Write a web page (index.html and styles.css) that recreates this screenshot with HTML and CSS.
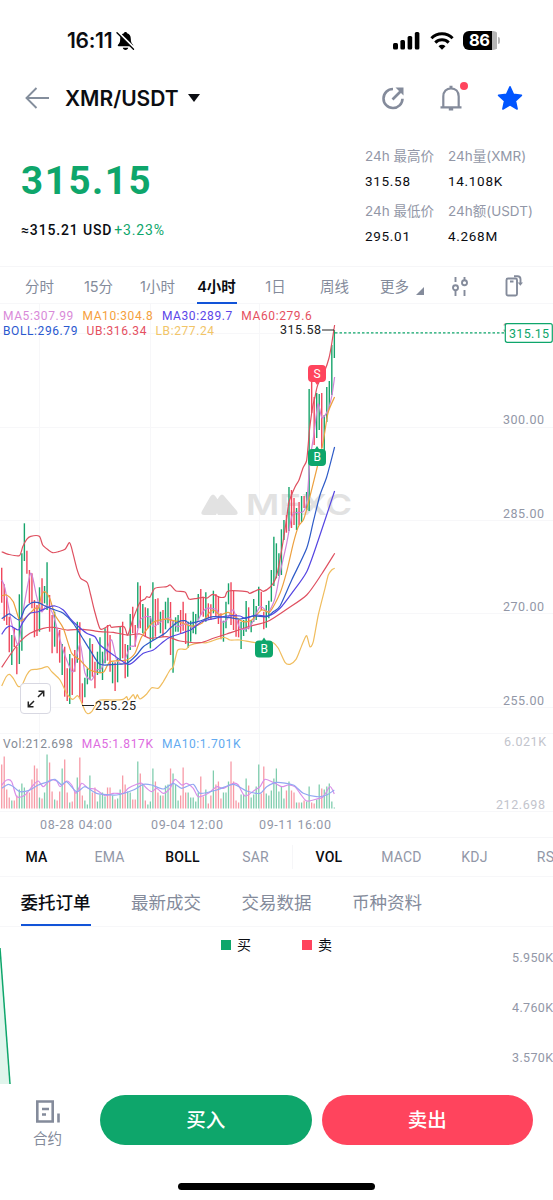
FILE: index.html
```html
<!DOCTYPE html>
<html lang="zh-CN">
<head>
    <meta charset="UTF-8">
    <meta name="viewport" content="width=device-width, initial-scale=1.0">
    <title>XMR/USDT</title>
    <link rel="stylesheet" href="styles.css">
</head>
<body>
    <div class="status-bar">
        <div class="status-left">
            <span class="clock">16:11</span>
            <svg width="19" height="20" viewBox="0 0 19 20">
                <path d="M9.500 1c1 0 1.500.6 1.600 1.300 2.500.8 3.700 2.800 3.700 5.400 0 3.500.8 4.600 2.200 6.100.5.600.2 1.400-.6 1.400H2.600c-.8 0-1.100-.8-.6-1.400 1.400-1.500 2.200-2.600 2.200-6.100 0-2.600 1.200-4.600 3.700-5.400C8 1.600 8.500 1 9.500 1z"/>
                <path d="M6.800 16.800h5.400c-.3 1.300-1.300 2.200-2.700 2.200s-2.400-.9-2.700-2.200z"/>
                <path d="M1.800 1.200l17 16.600" stroke="#fff" stroke-width="2.400"/>
                <path d="M1 1.800l16.500 16.400" stroke="#000" stroke-width="1.400" stroke-linecap="round"/>
            </svg>
        </div>
        <div class="status-right">
            <svg width="27" height="18" viewBox="0 0 27 18">
                <rect x="0" y="11" width="5" height="6.500" rx="1.500"/>
                <rect x="7.400" y="8" width="4.600" height="9.500" rx="1.500"/>
                <rect x="14.600" y="4" width="4.600" height="13.500" rx="1.500"/>
                <rect x="21.800" y="0" width="4.600" height="17.500" rx="1.500"/>
            </svg>
            <svg width="24" height="18" viewBox="0 0 24 18" fill="none" stroke="#000" stroke-width="3">
                <path d="M1.400 6.200a15 15 0 0 1 21.200 0"/>
                <path d="M5.300 10.600a9.500 9.500 0 0 1 13.400 0"/>
                <path d="M8.500 14.200a5 5 0 0 1 7 0L12 17.800z" fill="#000" stroke="none"/>
            </svg>
            <div class="battery"><span>86</span></div>
        </div>
    </div>

    <div class="navbar">
        <svg class="back" width="24" height="22" viewBox="0 0 24 22" fill="none" stroke="#848e9c" stroke-width="1.900">
            <path d="M24.500 11H2M11.500 1L1.500 11l10 10"/>
        </svg>
        <h1>XMR/USDT</h1>
        <span class="caret"></span>
        <div class="nav-icons">
            <svg width="24" height="24" viewBox="0 0 24 24" fill="none" stroke="#848b9b" stroke-width="2.600">
                <path d="M12 3a9.500 9.500 0 1 0 9.500 9.700"/>
                <path d="M11.500 13.500l8-8"/>
                <path d="M14.500 1.500h8v8z" fill="#848b9b" stroke="none"/>
            </svg>
            <div class="bell">
                <svg width="22" height="26" viewBox="0 0 22 26" fill="none" stroke="#848b9b" stroke-width="2.200">
                    <path d="M3.300 21.800V11.500C3.300 6.500 6.500 3.300 11 3.300s7.700 3.200 7.700 8.200v10.300M.5 22.300h21M8.800 24.400h4.400M9.500 1.900h3"/>
                </svg>
                <span class="dot"></span>
            </div>
            <svg width="26" height="26" viewBox="0 0 26 26">
                <path d="M13 1.800l3.400 7.600 8 .9-6 5.500 1.700 8.200-7.100-4.200L5.900 24l1.700-8.200-6-5.500 8-.9z" fill="#0055ff" stroke="#0055ff" stroke-width="1.600" stroke-linejoin="round"/>
            </svg>
        </div>
    </div>

    <div class="summary">
        <div class="price-block">
            <div class="price">315.15</div>
            <div class="approx"><span>≈315.21 USD</span><span class="change">+3.23%</span></div>
        </div>
        <div class="stats">
            <div class="stat"><label>24h 最高价</label><b>315.58</b></div>
            <div class="stat"><label>24h量(XMR)</label><b>14.108K</b></div>
            <div class="stat"><label>24h 最低价</label><b>295.01</b></div>
            <div class="stat"><label>24h额(USDT)</label><b>4.268M</b></div>
        </div>
    </div>

    <div class="periods">
        <span>分时</span>
        <span>15分</span>
        <span>1小时</span>
        <span class="active">4小时</span>
        <span>1日</span>
        <span>周线</span>
        <span class="more">更多<i></i></span>
        <svg width="16" height="20" viewBox="0 0 16 20" fill="none" stroke="#848b9b" stroke-width="1.900">
            <path d="M3.500 1v5M3.500 14.500V20M12.500 1v3M12.500 14v6"/>
            <circle cx="3.500" cy="11.700" r="2.500"/>
            <circle cx="12.500" cy="6.800" r="2.500"/>
        </svg>
        <svg class="rotate" width="18" height="22" viewBox="0 0 18 22" fill="none" stroke="#848b9b" stroke-width="1.900">
            <rect x="1.500" y="3.500" width="10.500" height="17" rx="1.500"/>
            <path d="M5 6.500h3.500M9 1.300h3.500q3 0 3 3v4.500"/>
            <path d="M12.700 7.500h5.300l-2.650 3.300z" fill="#848b9b" stroke="none"/>
        </svg>
    </div>

    <div class="chart">
        <svg id="kline" width="553" height="533" viewBox="0 304 553 533">
            <path class="grid" d="M39.500 304V811M150.500 304V811M259.500 304V811M0 333.500H553M0 427.500H553M0 520.500H553M0 613.500H553M0 707.500H553M0 733.500H553M0 811.500H553"/>

            <g class="watermark">
                <path d="M204 515q-4 0-2-4l8-14q3-5 6 0l5 8-5 10zM218 515l-5-9 6-9q3-5 6 0l12 14q2 4-2 4z"/>
                <text x="246" y="515" textLength="106" lengthAdjust="spacingAndGlyphs">MEXC</text>
            </g>

            <g id="candles"></g>
            <g id="volumes"></g>
            <g id="lines"></g>

            <path d="M82 705.500H94M322 330H334" stroke="#222" stroke-width="1"/>
            <text class="mark" x="95" y="710" textLength="41">255.25</text>
            <text class="mark" x="280" y="334" textLength="41">315.58</text>

            <g class="badge sell">
                <path d="M308 369q0-4 4-4h10q4 0 4 4v9q0 4-4 4h-3l-2 3-2-3h-3q-4 0-4-4z"/>
                <text x="317" y="377.500">S</text>
            </g>
            <g class="badge buy">
                <path d="M308 453q0-4 4-4h3l2-3 2 3h3q4 0 4 4v9q0 4-4 4h-10q-4 0-4-4z"/>
                <text x="317.300" y="461">B</text>
            </g>
            <g class="badge buy">
                <path d="M255 644.500q0-4 4-4h3l2-3 2 3h3q4 0 4 4v9q0 4-4 4h-10q-4 0-4-4z"/>
                <text x="264.300" y="652.500">B</text>
            </g>

            <g class="axis">
                <text x="503" y="331.500" textLength="41">315.00</text>
                <text x="503" y="424" textLength="41">300.00</text>
                <text x="503" y="517.500" textLength="41">285.00</text>
                <text x="503" y="611" textLength="41">270.00</text>
                <text x="503" y="704.500" textLength="41">255.00</text>
                <text class="faint" x="504" y="745.500" textLength="42">6.021K</text>
                <text class="faint" x="496" y="808.500" textLength="49">212.698</text>
                <text x="40" y="828.500" textLength="72">08-28 04:00</text>
                <text x="151" y="828.500" textLength="72">09-04 12:00</text>
                <text x="259" y="828.500" textLength="72">09-11 16:00</text>
            </g>

            <path d="M335 332.800H505" stroke="#0ea66b" stroke-width="1.300" stroke-dasharray="2.500 2"/>
            <rect x="505.300" y="323.700" width="47" height="18.600" rx="2" fill="#fff" stroke="#0ea66b" stroke-width="1.200"/>
            <text class="last" x="509" y="338" textLength="40">315.15</text>
        </svg>
        <div class="legend">
            <div><span class="c-ma5">MA5:307.99</span><span class="c-ma10">MA10:304.8</span><span class="c-ma30">MA30:289.7</span><span class="c-ma60">MA60:279.6</span></div>
            <div><span class="c-boll">BOLL:296.79</span><span class="c-ub">UB:316.34</span><span class="c-lb">LB:277.24</span></div>
        </div>
        <div class="legend vol-legend">
            <div><span class="c-vol">Vol:212.698</span><span class="c-vol5">MA5:1.817K</span><span class="c-vol10">MA10:1.701K</span></div>
        </div>
        <button class="expand">
            <svg width="18" height="18" viewBox="0 0 18 18" fill="none" stroke="#222" stroke-width="1.500">
                <path d="M11 7l5.500-5.500M11.500 1.300h5.200v5.200M7 11l-5.500 5.500M1.300 11.500v5.200h5.200"/>
            </svg>
        </button>
    </div>

    <div class="indicators">
        <span class="active">MA</span>
        <span>EMA</span>
        <span class="active">BOLL</span>
        <span>SAR</span>
        <span class="active split">VOL</span>
        <span>MACD</span>
        <span>KDJ</span>
        <span>RSI</span>
    </div>

    <div class="tabs">
        <span class="active">委托订单</span>
        <span>最新成交</span>
        <span>交易数据</span>
        <span>币种资料</span>
    </div>

    <div class="depth">
        <div class="depth-legend">
            <span><i class="bg-buy"></i>买</span>
            <span><i class="bg-sell"></i>卖</span>
        </div>
        <svg width="553" height="130" viewBox="0 0 553 130">
            <path d="M0-6L10 130H0z" fill="#e0f5ec"/>
            <path d="M0-6L10 130" stroke="#0ea66b" stroke-width="1.500"/>
            <g class="axis">
                <text x="512" y="8" textLength="41">5.950K</text>
                <text x="512" y="58" textLength="41">4.760K</text>
                <text x="512" y="108" textLength="41">3.570K</text>
            </g>
        </svg>
    </div>

    <div class="footer">
        <div class="futures">
            <svg width="26" height="23" viewBox="0 0 26 23" fill="none" stroke="#848b9b" stroke-width="2.600">
                <path d="M19 21.500H2.300V1.500h15.400v20M7 9h7M7 14.500h4M23.500 13.500v9"/>
            </svg>
            <span>合约</span>
        </div>
        <button class="trade bg-buy">买入</button>
        <button class="trade bg-sell">卖出</button>
    </div>
    <div class="home-indicator"></div>

    <script src="chart.js"></script>
</body>
</html>
```
FILE: styles.css
```css
* {
    box-sizing: border-box;
}

body {
    margin: 0;
    width: 553px;
    height: 1200px;
    overflow: hidden;
    background-color: #fff;
    color: #0b0d12;
    font-family: Inter, "Noto Sans CJK SC", sans-serif;
}

svg {
    display: block;
    flex-shrink: 0;
}

button {
    border: none;
    padding: 0;
    font-family: inherit;
}

.bg-buy {
    background-color: #0ea66b;
}

.bg-sell {
    background-color: #ff445d;
}

/* Status bar */
.status-bar {
    display: flex;
    justify-content: space-between;
    align-items: center;
    height: 81px;
    padding: 0 51px 0 67px;
}

.status-left,
.status-right {
    display: flex;
    align-items: center;
}

.clock {
    font-size: 21px;
    font-weight: 600;
    letter-spacing: -0.300px;
    margin-right: 4px;
}

.status-right {
    gap: 9.500px;
    margin-right: 3px;
}

.battery {
    position: relative;
    width: 36px;
    height: 19px;
    border-radius: 6px;
    background: linear-gradient(to right, #000 29px, #b5b5b5 29px, #b5b5b5 34px, #fff 34px);
    color: #fff;
    font-size: 16.500px;
    font-weight: 700;
    line-height: 19px;
    letter-spacing: -0.500px;
    padding-left: 6px;
}

.battery::after {
    content: "";
    position: absolute;
    right: -1px;
    top: 6px;
    width: 2px;
    height: 7px;
    border-radius: 0 3px 3px 0;
    background-color: #b5b5b5;
}

/* Navbar */
.navbar {
    display: flex;
    align-items: center;
    height: 34px;
    padding: 0 30.500px 0 25px;
}

.navbar h1 {
    margin: 0 9px 0 16px;
    font-size: 21px;
    font-weight: 600;
}

.caret {
    border: 6.500px solid transparent;
    border-top: 8px solid #0b0d12;
    border-bottom: none;
}

.nav-icons {
    display: flex;
    align-items: center;
    margin-left: auto;
    gap: 35px;
}

.bell {
    position: relative;
}

.dot {
    position: absolute;
    top: -3px;
    right: -6px;
    width: 8px;
    height: 8px;
    border-radius: 50%;
    background-color: #ff445d;
}

/* Price summary */
.summary {
    display: flex;
    justify-content: space-between;
    height: 151px;
    padding: 31px 0 0 21px;
}

.price {
    margin-top: 11px;
    color: #0ea66b;
    font-family: Roboto, sans-serif;
    font-size: 38.500px;
    font-weight: 700;
    line-height: 48px;
    letter-spacing: 1.600px;
}

.approx {
    display: flex;
    gap: 2px;
    margin-top: 16px;
    font-family: Roboto, sans-serif;
    font-size: 14px;
    font-weight: 500;
    line-height: 18px;
    letter-spacing: 0.850px;
}

.change {
    color: #0ea66b;
    font-weight: 400;
}

.stats {
    display: grid;
    grid-template-columns: 83px 92px;
    grid-auto-rows: 55px;
    width: 188px;
}

.stat label,
.stat b {
    display: block;
    white-space: nowrap;
}

.stat label {
    height: 20px;
    color: #9297a7;
    font-size: 13.500px;
    line-height: 20px;
}

.stat b {
    font-family: Roboto, sans-serif;
    font-size: 13.500px;
    font-weight: 400;
    line-height: 31px;
    letter-spacing: 0.700px;
}

/* Time periods */
.periods {
    display: flex;
    align-items: center;
    height: 38px;
    padding-left: 10px;
    border-top: 1px solid #f6f6f8;
    border-bottom: 1px solid #f7f7f9;
    color: #848b9b;
    font-size: 14.500px;
}

.periods span {
    position: relative;
    width: 59px;
    height: 36px;
    line-height: 39px;
    text-align: center;
    white-space: nowrap;
}

.periods svg {
    margin-top: 2px;
}

.periods .active {
    color: #0b0d12;
    font-weight: 600;
}

.periods .active::after {
    content: "";
    position: absolute;
    left: 10px;
    right: 9px;
    bottom: -1px;
    height: 2px;
    background-color: #1254d8;
}

.periods .more {
    width: 73px;
    padding-left: 16px;
    margin-right: 15px;
    text-align: left;
}

.more i {
    display: inline-block;
    margin-left: 7px;
    border-left: 8px solid transparent;
    border-bottom: 8px solid #848b9b;
    transform: translateY(3px);
}

.periods .rotate {
    margin-left: 37px;
}

/* K-line chart */
.chart {
    position: relative;
    height: 533px;
}

.grid {
    fill: none;
    stroke: #f7f7f9;
}

.watermark {
    fill: #e2e2e2;
}

.chart text,
.depth text {
    font-family: Roboto, sans-serif;
    font-size: 12.500px;
}

.chart .watermark text {
    font-family: Inter, sans-serif;
    font-size: 29px;
    font-weight: 600;
}

.mark {
    fill: #222;
}

.axis {
    fill: #9297a7;
}

.axis .faint {
    fill: #c2c4cc;
}

.chart .last {
    fill: #0ea66b;
}

.chart .badge text {
    fill: #fff;
    font-size: 12px;
    text-anchor: middle;
}

.sell path {
    fill: #ff445d;
}

.buy path {
    fill: #0ea66b;
}

.legend {
    position: absolute;
    left: 3px;
    top: 5px;
    font-family: Roboto, sans-serif;
    font-size: 12px;
    line-height: 15px;
    letter-spacing: 0.600px;
}

.vol-legend {
    top: 433px;
}

.legend div {
    display: flex;
    gap: 8.500px;
}

.c-ma5 { color: #d98ad9; }
.c-ma10 { color: #f5a03c; }
.c-ma30 { color: #5b46e8; }
.c-ma60 { color: #e5505f; }
.c-boll { color: #2a59cf; }
.c-ub { color: #e5505f; }
.c-lb { color: #f2c568; }
.c-vol { color: #848b95; }
.c-vol5 { color: #dd6be0; }
.c-vol10 { color: #62aaf0; }

.expand {
    position: absolute;
    left: 20px;
    top: 379px;
    display: flex;
    align-items: center;
    justify-content: center;
    width: 31px;
    height: 31px;
    border: 1px solid #d8d8e2;
    border-radius: 4px;
    background-color: #fff;
}

/* Indicators */
.indicators {
    display: flex;
    align-items: center;
    height: 40px;
    overflow: hidden;
    border-top: 1px solid #f6f6f8;
    border-bottom: 1px solid #f7f7f9;
    color: #9297a7;
    font-family: Roboto, sans-serif;
    font-size: 14px;
    letter-spacing: 0.200px;
}

.indicators span {
    flex: 0 0 73px;
    text-align: center;
    line-height: 24px;
}

.indicators .active {
    color: #0b0d12;
    font-weight: 500;
}

.split {
    border-left: 1px solid #f6f6f8;
}

/* Tabs */
.tabs {
    display: flex;
    gap: 40.500px;
    height: 50px;
    padding-left: 20.500px;
    border-bottom: 1px solid #f7f7f9;
    color: #848b9b;
    font-size: 17.500px;
    line-height: 51px;
}

.tabs .active {
    border-bottom: 2px solid #1254d8;
    color: #0b0d12;
    font-weight: 500;
}

/* Depth chart */
.depth {
    height: 157px;
}

.depth-legend {
    display: flex;
    justify-content: center;
    gap: 51px;
    height: 27px;
    padding-top: 8px;
    font-size: 14px;
    line-height: 20px;
}

.depth-legend span {
    display: flex;
    align-items: center;
    gap: 6px;
}

.depth-legend i {
    width: 10px;
    height: 10px;
}

.depth svg {
    overflow: visible;
}

/* Footer */
.footer {
    display: flex;
    height: 99px;
    padding: 11px 20px 0 0;
}

.futures {
    display: flex;
    flex-direction: column;
    align-items: center;
    width: 95px;
    padding-top: 5px;
    margin-right: 5px;
    color: #848b9b;
    font-size: 14.500px;
}

.futures span {
    margin-top: 6px;
    line-height: 20px;
}

.trade {
    flex: 1;
    height: 50px;
    padding-bottom: 3px;
    border-radius: 25px;
    color: #fff;
    font-size: 19.500px;
    font-weight: 500;
}

.trade + .trade {
    margin-left: 10px;
}

.home-indicator {
    width: 197px;
    height: 7px;
    margin: 0 auto;
    border-radius: 4px;
    background-color: #000;
}
```
FILE: chart.js
```js
const NS = 'http://www.w3.org/2000/svg';
const UP = '#17a46b';
const DOWN = '#f0475c';
const START = 1.7;
const STEP = 2.52;

// direction of each bar, g = up, r = down
const dirs =
    'rrrrgrrggg' + 'rrrrrgrggr' + 'rgrrgrrgrr' + 'grrgggrrgg' + 'ggrrgrggrr' +
    'ggrrgrgrgg' + 'grrgrggrgg' + 'grrrgggggr' + 'rgrrgrrrgg' + 'grrrrgggrg' +
    'gggrrggggg' + 'gggrgrrgrg' + 'rggrrggrgg' + 'ggg';

const highLow = [
    // high, low
    567.7, 602.7, 584.3, 620.7, 597.3, 625, 616.7, 652.3, 635, 665, 628, 647, 646.7, 674.3, 594.3, 664, 553.3, 650.7, 523.3, 561,
    550.7, 573.7, 570, 603.3, 573.3, 608.3, 600, 637.3, 605, 636, 587.3, 631.7, 578.3, 610, 586, 603.3, 562.3, 610, 595, 631.7,
    615, 653.3, 611.7, 646.7, 628.3, 653.3, 630, 662.7, 644, 675, 646.7, 696.7, 668.3, 701, 654, 704, 658.3, 695, 650, 671.7,
    621.7, 662.7, 622.3, 699, 683.3, 703.3, 677.7, 697.3, 668.3, 684.3, 638.3, 680, 644, 676.7, 661.7, 688.3, 651.7, 675, 637.3, 673.3,
    651.7, 680, 628.3, 663.3, 625, 660.7, 635, 671.7, 662.3, 683.3, 662.3, 691, 658.3, 682.3, 626.7, 660, 621.7, 658.3, 644, 678.3,
    645, 676.7, 614, 650, 606.7, 633.3, 625, 646.7, 582.3, 628.3, 585.7, 628.3, 604, 633.3, 607.3, 636.7, 608.3, 628.3, 616, 648.3,
    582.3, 640, 599, 636.7, 598.3, 625, 611.7, 633.3, 610, 636.7, 601.7, 629.3, 597.7, 623.3, 602, 655, 621, 672.7, 617.3, 631.7,
    615, 631.7, 610, 633.3, 601.7, 630.7, 613.3, 644, 621.7, 647.7, 620.7, 641.7, 611.7, 633.3, 614, 634.3, 594, 620, 589, 615,
    596.7, 616.7, 592.3, 621.7, 603.3, 618.3, 604.3, 620, 590.7, 613.3, 594, 616.7, 596, 624, 613.3, 639.3, 620.7, 641.7, 601.7, 628.3,
    583.3, 604.3, 582.3, 625, 590.7, 630, 614, 636.7, 620, 637.3, 621.7, 649, 620, 636, 601, 631.7, 607.3, 629.3, 620, 632.3,
    599, 621.7, 606, 620, 586.7, 606, 591.7, 610, 611.7, 629.3, 605, 627.7, 600.7, 618.3, 570, 601.7, 536.7, 586, 543.3, 578.3,
    553.3, 576, 529.3, 575, 520, 540, 515, 532.7, 487, 531, 490, 528, 498, 525, 508, 530, 502, 525, 496, 522,
    496, 508, 492, 510, 389, 511, 381, 413, 397, 445, 393, 438, 394, 430, 393, 448, 415, 462, 387, 422,
    381, 408, 345, 395, 330, 358
];

const volumes = [
    44, 52, 19, 11, 8, 8, 13, 19, 25, 21, 17, 16, 29, 43, 40, 11, 10, 16, 54, 46, 17, 9, 8, 17, 40, 49, 16, 6, 7, 17,
    31, 51, 13, 8, 4, 33, 16, 21, 7, 14, 16, 12, 21, 21, 13, 9, 10, 19, 33, 24, 17, 16, 9, 9, 47, 35, 24, 8, 4, 7,
    40, 27, 16, 13, 13, 23, 24, 40, 35, 24, 8, 13, 41, 16, 16, 11, 11, 7, 16, 32, 12, 19, 5, 13, 38, 24, 27, 10, 16, 16,
    27, 47, 27, 8, 6, 14, 14, 30, 23, 11, 14, 22, 44, 15, 42, 15, 13, 18, 30, 40, 17, 22, 10, 18, 27, 18, 16, 6, 6, 6,
    8, 7, 22, 6, 5, 9, 24, 20, 19, 22, 25, 7, 1
];

const lines = [
    { color: '#f0bd5e', points: [1.7,686, 6,677, 9.3,674.3, 13.3,678.3, 17.7,686, 21.7,685.7, 26.7,675, 30.7,670, 36.7,669.3, 41.7,668.3, 47.7,666.7, 51.7,671.7, 60,680, 66.7,693.3, 72.7,699.3, 77.3,695.7, 80,699, 85,710.7, 87.7,713.7, 91.7,711.7, 96.7,703.3, 100,700, 113,700, 123,699.3, 126.7,696.7, 128.3,700, 133.3,694.7, 135.3,699, 137.3,694.7, 140,699, 146.7,694, 151.7,687.7, 158.3,688.3, 163.3,681.7, 170,670, 173.3,666.7, 177.3,650.7, 180.7,649, 186,649.3, 190,645.3, 200,642.7, 206.7,642.7, 223.3,637.3, 230,640, 240,640, 255,642.7, 266.7,641.7, 273.3,642.7, 278.3,648.3, 285,662.3, 290,664.3, 296,659.3, 300,650, 303.3,641.7, 306.7,635.7, 310,646.7, 313.3,641.7, 318.3,615, 325,588.3, 328.3,575, 331.7,570, 334.7,568.3] },
    { color: '#df5060', points: [1.7,667.3, 10,655, 20,641.7, 30,633.3, 43.3,628.3, 53.3,627.3, 66.7,630, 83.3,629.3, 100,631.7, 113.3,632.3, 126.7,635, 140,634, 150,638.3, 166.7,636.7, 180,641, 200,642.7, 213.3,638.3, 226.7,634, 246.7,627.3, 266.7,621.7, 276.7,616, 286.7,609.3, 306.7,595, 321.7,574, 334.7,553.3] },
    { color: '#df5060', points: [1.7,551.7, 8.3,554.3, 19.3,555.7, 22.7,546.7, 26.7,539.3, 30.7,536.3, 39.3,536.3, 42.7,545, 48.3,550, 52.7,552.7, 58.3,551.7, 65,549.3, 69.3,542.7, 71.7,548.3, 76.7,568.3, 80.7,578.3, 87.3,582.7, 90.7,595, 94.3,610, 100,628.7, 106,627.3, 110,625, 111.7,627.3, 124,626.7, 127.7,635, 133.3,618.3, 140,602.3, 145,599, 146.7,596.7, 150,597, 155,588.3, 166.7,586.7, 170.3,585, 176,591, 185,592, 189,599, 195,598.7, 202.7,597.3, 207.3,598, 212.7,594.3, 220,597.3, 225,596.7, 228.3,591, 246.7,591.7, 250,593.3, 259.3,589.3, 263.3,591.3, 270,587.3, 275,580, 278.3,568.3, 283,542, 286.7,518, 289,502, 295,487, 299,480, 303,468, 306.5,461, 308,447, 309.5,430, 312.6,407, 315,397, 317.7,385, 325,370, 329,358, 331.5,345, 334.6,325] },
    { color: '#d184d8', points: [1.7,580, 5,588.3, 11.7,623.3, 18.3,645, 23.3,610, 30.7,573.3, 36.7,596.7, 41.7,611.7, 46.7,605, 53.3,615, 60,640, 66.7,660, 73.3,671.7, 80,643.3, 85,673.3, 91.7,680, 96.7,670, 101.7,668.3, 106.7,650, 111.7,640, 116.7,660, 123.3,663.3, 130,646.7, 135,645, 140,620, 150,616.7, 153.3,626.7, 163.3,620, 170,618, 176.7,626.7, 186.7,623.3, 193.3,628.3, 201.7,613.3, 206.7,608.3, 216.7,610, 221.7,621.7, 226.7,620, 233.3,610, 240,628.3, 250,626.7, 260,606.7, 268.3,611.7, 275,598.3, 280,573.3, 286.7,543.3, 291.7,516.7, 295,512.7, 303.3,511.7, 307,500, 310,460, 314,434, 318,404, 322,418, 328,410, 332,395, 334.6,377] },
    { color: '#eda03f', points: [1.7,595.7, 6.7,595, 13.3,601.7, 20,620.7, 28.3,615, 35,608.3, 38.3,608.3, 41.7,595, 45,591.7, 50,599, 55,615, 63.3,628.3, 71.7,653.3, 80,660, 90,670, 103.3,672.3, 110,661.7, 126.7,660, 135,653.3, 141.7,636.7, 153.3,622.3, 166.7,619, 170,620, 178.3,621.7, 191.7,626, 201.7,623.3, 208.3,614, 213.3,610, 220,615, 228.3,612.3, 235,616.7, 243.3,621.7, 251.7,620, 261.7,610, 270,611.7, 280,593.3, 286.7,571.7, 293.3,543.3, 298.3,526.7, 303.3,520, 307,508, 317,468, 323,443, 328,413, 334.6,397] },
    { color: '#5545e2', points: [1.7,634.3, 6,628.3, 10.7,626, 18.3,630, 23.3,621.7, 30,613.3, 38.3,611.7, 48.3,607.3, 55,606, 63.3,610, 70,618.3, 76.7,625, 86.7,633.3, 95,636.7, 100,645, 113.3,655, 126.7,664, 131.7,663.3, 143.3,653.3, 153.3,650, 163.3,641.7, 170,637.3, 181.7,633.3, 191.7,629.3, 201.7,621.7, 215,618.3, 226.7,616, 240,616, 245,618.3, 256.7,615, 268.3,616, 280,608.3, 291.7,593.3, 306.7,571.7, 318.3,540, 334.6,491] },
    { color: '#2e5bc8', points: [1.7,618.7, 6,615.7, 10,614, 19.3,620, 25,608.3, 31.7,602.7, 38.3,602.7, 46.7,606.7, 55,610, 63.3,613.3, 73.3,623.3, 81.7,636.7, 90,650, 100,664.3, 115,664.3, 126.7,663.3, 136.7,655, 143.3,646.7, 156.7,638.3, 165,633.3, 170,628.3, 178.3,621.7, 185,620.7, 190,623.3, 200,621, 213.3,616.7, 230,617.7, 240,619, 253.3,616, 266.7,616.7, 273.3,611.7, 280,606, 291.7,580, 306.7,548.3, 313.3,521.7, 320,495, 326.7,477, 334.6,447] },
    { color: '#d98ee8', points: [1.7,785, 6.7,780, 11.7,781.7, 16.7,796.7, 25,795, 33.3,785, 38.3,781, 43.3,786.7, 50,780, 56.7,781, 60,786.7, 66.7,781, 71.7,785, 76,793.3, 81.7,783.3, 88.3,788.3, 95,789, 105,795.7, 113.3,793.3, 123.3,793.3, 128.3,788.3, 136.7,784.3, 141.7,783.3, 146.7,788.3, 151.7,791.7, 156.7,788.3, 163.3,793.3, 170,788.3, 175,779.3, 181.7,785, 186.7,783.3, 193.3,788.3, 198.3,796.7, 208.3,793.3, 216.7,786.7, 223.3,788.3, 233.3,783.3, 238.3,785, 245,796, 255,790, 260,786.7, 265,779.3, 275,783.3, 281.7,786.7, 288.3,785, 295,786.7, 300,793.3, 306.7,801, 316.7,799, 323.3,796.7, 330,786.7, 334.3,794] },
    { color: '#92a8f2', points: [1.7,788.3, 8.3,784.3, 13.3,786.7, 20,791.7, 30,790, 38.3,785, 48.3,781.7, 55,779.3, 61.7,785, 66.7,781.7, 76.7,791.7, 85,786.7, 96.7,793.3, 116.7,795, 133.3,790, 143.3,784.3, 151.7,785, 163.3,789, 173.3,783.3, 181.7,788.3, 193.3,784.3, 200,793.3, 216.7,790, 233.3,784.3, 246.7,791, 260,793.3, 266.7,786.7, 276.7,782.3, 293.3,785, 303.3,793.3, 316.7,796.7, 326.7,795, 334.3,790] }
];

function addPath(parent, d, color, width) {
    const path = document.createElementNS(NS, 'path');
    path.setAttribute('d', d);
    path.setAttribute('fill', 'none');
    path.setAttribute('stroke', color);
    path.setAttribute('stroke-width', width);
    path.setAttribute('stroke-linejoin', 'round');
    parent.appendChild(path);
    return path;
}

// Curve through every point of the line
function smooth(p) {
    let d = `M${p[0]} ${p[1]}`;
    const last = p.length - 2;
    for (let i = 0; i < last; i += 2) {
        const a = Math.max(i - 2, 0);
        const b = Math.min(i + 4, last);
        const c1x = p[i] + (p[i + 2] - p[a]) / 8;
        const c1y = p[i + 1] + (p[i + 3] - p[a + 1]) / 8;
        const c2x = p[i + 2] - (p[b] - p[i]) / 8;
        const c2y = p[i + 3] - (p[b + 1] - p[i + 1]) / 8;
        d += `C${c1x} ${c1y} ${c2x} ${c2y} ${p[i + 2]} ${p[i + 3]}`;
    }
    return d;
}

const candleGroup = document.getElementById('candles');
const volumeGroup = document.getElementById('volumes');
const lineGroup = document.getElementById('lines');

volumes.forEach((height, i) => {
    const x = (START + i * STEP).toFixed(2);
    const color = dirs[i] === 'g' ? UP : DOWN;
    addPath(candleGroup, `M${x} ${highLow[i * 2]}V${highLow[i * 2 + 1]}`, color, 1.4);
    addPath(volumeGroup, `M${x} 808.500V${808.5 - height}`, color, 1.3).setAttribute('opacity', 0.55);
});

lines.forEach(line => addPath(lineGroup, smooth(line.points), line.color, 1.2));
```
